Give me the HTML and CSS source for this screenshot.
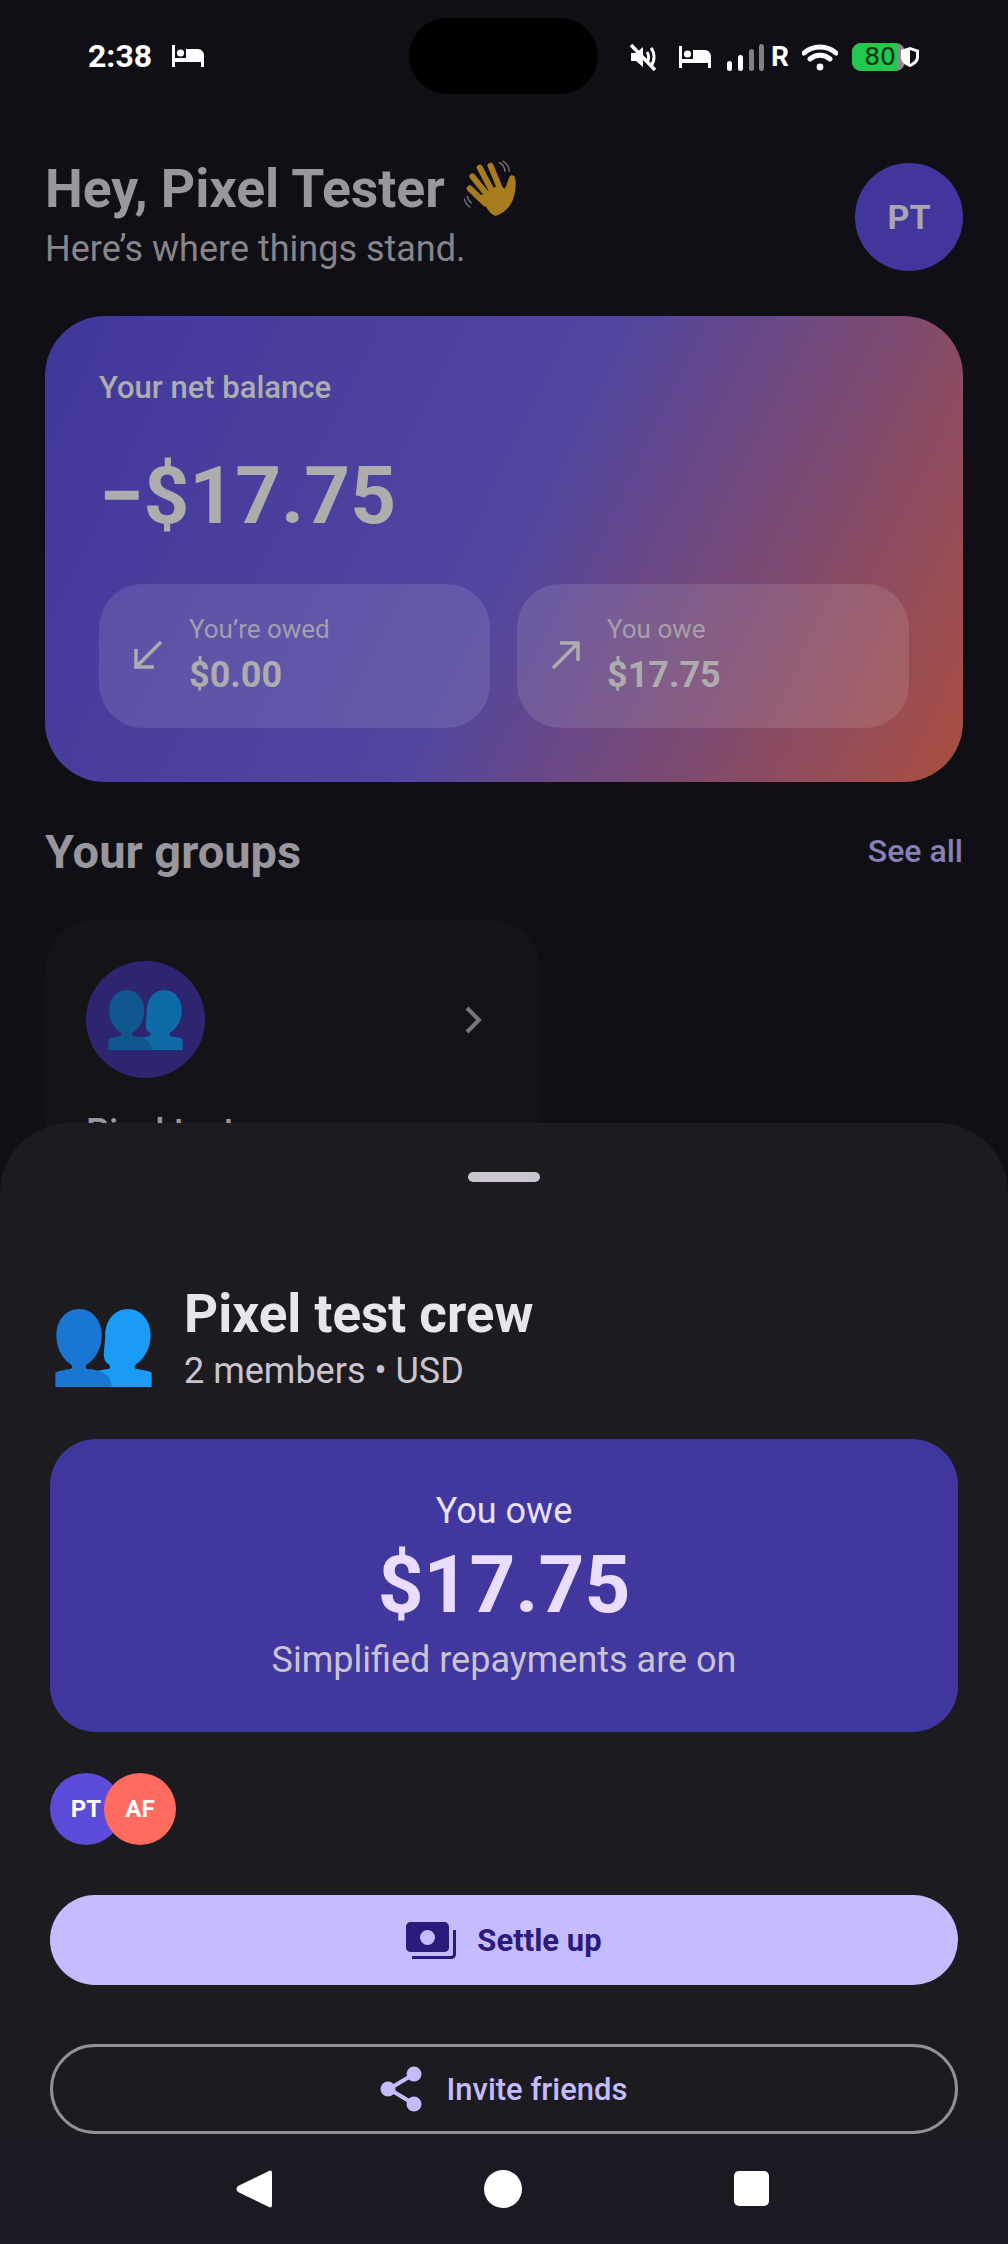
FILE: index.html
```html
<!DOCTYPE html>
<html lang="en">
<head>
  <meta charset="UTF-8">
  <meta name="viewport" content="width=device-width, initial-scale=1.0">
  <title>Pixel test crew</title>
  <link rel="stylesheet" href="styles.css">
</head>
<body>
  <svg class="defs" width="0" height="0">
    <symbol id="people" viewBox="78 90 284 230">
      <path class="front" d="M292 90c38 0 67 32 67 78 0 38-20 70-42 84-6 4-8 12 0 15 14 2 30 4 45 10v43H190v-43c14-6 30-8 44-10 8-3 6-11 0-15-22-14-9-46-9-84 0-46 29-78 67-78z"/>
      <path class="back" d="M148 90c38 0 67 32 67 78 0 38-20 70-42 84-6 4-8 12 0 15 25 2 71 8 71 53H78v-43c14-6 30-8 44-10 8-3 6-11 0-15-22-14-41-46-41-84 0-46 29-78 67-78z"/>
    </symbol>
    <symbol id="bed" viewBox="0 0 32 22">
      <path d="M0 0h3v13h11V4h12c3 0 6 3 6 6v12h-3v-5H3v5H0z"/>
      <circle cx="8.5" cy="8" r="3.6"/>
    </symbol>
  </svg>

  <div class="phone">
    <div class="status-bar">
      <div class="status-left">
        <span class="clock">2:38</span>
        <svg class="bed-icon" width="32" height="22"><use href="#bed"/></svg>
      </div>
      <div class="camera-pill"></div>
      <div class="status-right">
        <svg class="mute-icon" width="28" height="28" viewBox="0 0 28 28">
          <path d="M2 10h5l7-6v20l-7-6H2z"/>
          <path class="thin" d="M18 9c2 3 2 7 0 10M22 5c4 5 4 13 0 18"/>
          <path class="slash" d="M2 2l24 25"/>
        </svg>
        <svg class="bed-icon" width="32" height="22"><use href="#bed"/></svg>
        <svg class="signal-icon" width="38" height="27" viewBox="0 0 38 27">
          <rect x="0" y="17" width="5" height="10" rx="2.5"/>
          <rect x="11" y="11" width="5" height="16" rx="2.5"/>
          <rect class="off" x="22" y="5" width="5" height="22" rx="2.5"/>
          <rect class="off" x="32" y="0" width="5" height="27" rx="2.5"/>
        </svg>
        <span class="roaming">R</span>
        <svg class="wifi-icon" width="36" height="27" viewBox="0 0 36 27">
          <path d="M2 9c9-8 23-8 32 0M8 15c6-5 14-5 20 0"/>
          <circle cx="18" cy="23" r="3.4"/>
        </svg>
        <div class="battery"><span class="battery-level">80</span></div>
        <svg class="shield-icon" width="20" height="22" viewBox="0 0 20 22">
          <path d="M10 1l9 3v7c0 5-4 8-9 10-5-2-9-5-9-10V4z" fill="#fff"/>
          <path d="M10 4l6 2v5c0 3-3 5-6 7z" fill="#100f15"/>
        </svg>
      </div>
    </div>

    <div class="home">
      <header class="greeting">
        <div>
          <h1 class="greeting-title">Hey, Pixel Tester
            <svg class="wave" width="57" height="62" viewBox="75 55 170 185">
              <path class="wave-lines" d="M185 68c12 6 18 16 18 28M196 64c14 8 20 18 20 32M82 176c2 12 8 20 18 26M90 168c2 10 6 16 14 22"/>
              <path class="wave-fingers" d="M98 146l46 44M106 110l50 62M128 84l40 76M160 78l30 72M224 116l-18 50"/>
              <path class="wave-palm" d="M128 168l52-30 30 10 25-30c2 40-6 92-60 110-20-6-30-30-47-60z"/>
            </svg>
          </h1>
          <p class="greeting-sub">Here’s where things stand.</p>
        </div>
        <div class="avatar-me">PT</div>
      </header>

      <section class="hero">
        <div class="hero-label">Your net balance</div>
        <div class="hero-amount">−$17.75</div>
        <div class="hero-stats">
          <div class="stat">
            <svg class="arrow" width="30" height="30" viewBox="0 0 30 30"><path d="M28 2L3 27M3 9v18h18"/></svg>
            <div>
              <div class="stat-label">You’re owed</div>
              <div class="stat-value">$0.00</div>
            </div>
          </div>
          <div class="stat">
            <svg class="arrow" width="30" height="30" viewBox="0 0 30 30"><path d="M2 28L27 3M9 3h18v18"/></svg>
            <div>
              <div class="stat-label">You owe</div>
              <div class="stat-value">$17.75</div>
            </div>
          </div>
        </div>
      </section>

      <div class="section-head">
        <h2 class="section-title">Your groups</h2>
        <span class="see-all">See all</span>
      </div>

      <div class="group-card">
        <div class="group-top">
          <div class="group-circle">
            <svg class="people-dim" width="75" height="60"><use href="#people"/></svg>
          </div>
          <svg class="chevron" width="18" height="28" viewBox="0 0 18 28"><path d="M3 2l12 12L3 26"/></svg>
        </div>
        <div class="group-name">Pixel test crew</div>
      </div>
    </div>

    <!-- bottom sheet over the dimmed home screen -->
    <div class="sheet">
      <div class="sheet-body">
        <div class="handle"></div>
        <div class="sheet-head">
          <svg class="people-full" width="97" height="78"><use href="#people"/></svg>
          <div>
            <div class="sheet-title">Pixel test crew</div>
            <div class="sheet-sub">2 members • USD</div>
          </div>
        </div>

        <div class="owe-card">
          <div class="owe-label">You owe</div>
          <div class="owe-amount">$17.75</div>
          <div class="owe-note">Simplified repayments are on</div>
        </div>

        <div class="members">
          <div class="member member-pt">PT</div>
          <div class="member member-af">AF</div>
        </div>

        <button class="btn btn-settle">
          <svg width="50" height="37" viewBox="0 0 50 37">
            <path d="M5 0h33c3 0 5 2 5 5v21c0 2-2 4-5 4H5c-3 0-5-2-5-4V5c0-3 2-5 5-5zm16.500 8a7.500 7.500 0 100 15 7.500 7.500 0 000-15z" fill-rule="evenodd"/>
            <path d="M47 8h3v24c0 3-2 5-5 5H6v-3h39c1 0 2-1 2-2z"/>
          </svg>
          Settle up
        </button>
        <button class="btn btn-invite">
          <svg width="42" height="46" viewBox="0 0 42 46">
            <path class="share-line" d="M34 8L9 23l25 15"/>
            <circle cx="34" cy="8" r="7.500"/>
            <circle cx="8" cy="23" r="7.500"/>
            <circle cx="34" cy="38" r="7.500"/>
          </svg>
          Invite friends
        </button>
      </div>

      <nav class="nav-bar">
        <svg width="36" height="38" viewBox="0 0 36 38"><path d="M33 1c2-1 3 0 3 2v32c0 2-1 3-3 2L2 22c-2-2-2-4 0-6z"/></svg>
        <div class="nav-home"></div>
        <div class="nav-recent"></div>
      </nav>
    </div>
  </div>
</body>
</html>
```

FILE: styles.css
```css
* {
  margin: 0;
  padding: 0;
  box-sizing: border-box;
}

html, body {
  width: 1008px;
  height: 2244px;
  overflow: hidden;
  background-color: #100f15;
  font-family: 'Roboto', 'Liberation Sans', sans-serif;
}

.defs {
  position: absolute;
}

.phone {
  position: relative;
  width: 1008px;
  height: 2244px;
  overflow: hidden;
}

/* status bar */
.status-bar {
  position: relative;
  height: 94px;
  color: #fff;
}

.status-left {
  position: absolute;
  left: 88px;
  top: 38px;
  display: flex;
  align-items: center;
  gap: 20px;
}

.clock {
  font-size: 32px;
  font-weight: 700;
  line-height: 36px;
}

.bed-icon {
  fill: #fff;
}

.camera-pill {
  position: absolute;
  left: 409px;
  top: 18px;
  width: 189px;
  height: 76px;
  border-radius: 38px;
  background-color: #000;
}

.status-right {
  position: absolute;
  left: 629px;
  top: 43px;
  width: 292px;
  height: 28px;
  display: flex;
  align-items: center;
}

.mute-icon {
  fill: #fff;
  margin-right: 22px;
}

.mute-icon .thin,
.mute-icon .slash {
  fill: none;
  stroke: #fff;
  stroke-width: 3;
}

.mute-icon .slash {
  stroke-width: 3.5;
  stroke: #fff;
}

.signal-icon {
  fill: #fff;
  margin-left: 16px;
}

.signal-icon .off {
  fill: #808080;
}

.roaming {
  margin-left: 6px;
  font-size: 28px;
  font-weight: 700;
  line-height: 28px;
}

.wifi-icon {
  margin-left: 13px;
  fill: #fff;
}

.wifi-icon path {
  fill: none;
  stroke: #fff;
  stroke-width: 5;
  stroke-linecap: round;
}

.battery {
  margin-left: 14px;
  width: 53px;
  height: 28px;
  border-radius: 9px;
  background-color: #8a8a8a;
}

.battery-level {
  display: block;
  width: 45px;
  height: 28px;
  padding-right: 1px;
  border-radius: 9px 0 0 9px;
  background-color: #22c84e;
  color: #06320f;
  font-family: 'DejaVu Sans', sans-serif;
  font-size: 25px;
  line-height: 28px;
  text-align: right;
}

.shield-icon {
  margin-left: -5px;
}

/* home screen, dimmed by the sheet */
.home {
  padding: 0 45px;
}

.greeting {
  display: flex;
  justify-content: space-between;
  align-items: flex-start;
  padding-top: 69px;
}

.greeting-title {
  display: flex;
  align-items: center;
  gap: 17px;
  height: 66px;
  margin-top: -7px;
  color: #99969d;
  font-size: 53.5px;
  font-weight: 700;
  line-height: 66px;
}

.wave-lines {
  fill: none;
  stroke: #6f7a80;
  stroke-width: 4;
}

.wave-fingers {
  fill: none;
  stroke: #a67c1f;
  stroke-width: 18;
  stroke-linecap: round;
}

.wave-palm {
  fill: #a67c1f;
}

.greeting-sub {
  margin-top: 5px;
  color: #87848b;
  font-size: 36px;
  line-height: 44px;
}

.avatar-me {
  display: flex;
  justify-content: center;
  align-items: center;
  width: 108px;
  height: 108px;
  border-radius: 50%;
  background-color: #40369b;
  color: #a9a6b0;
  font-size: 34px;
  font-weight: 700;
}

.hero {
  height: 466px;
  margin-top: 45px;
  padding: 54px 54px 0;
  border-radius: 60px;
  background: linear-gradient(116deg, #40379b 0%, #5046a0 50%, #ab4f40 100%);
  color: #adadad;
}

.hero-label {
  font-size: 31px;
  font-weight: 500;
  line-height: 36px;
}

.hero-amount {
  margin-top: 40px;
  font-size: 80px;
  font-weight: 700;
  line-height: 100px;
}

.hero-stats {
  display: grid;
  grid-template-columns: 391px 392px;
  gap: 27px;
  margin-top: 38px;
}

.stat {
  display: flex;
  align-items: center;
  gap: 26px;
  height: 144px;
  padding: 0 0 2px 34px;
  border-radius: 44px;
  background-color: rgba(255, 255, 255, 0.11);
}

.arrow {
  fill: none;
  stroke: #adadad;
  stroke-width: 3.5;
}

.stat-label {
  font-size: 26px;
  line-height: 34px;
  opacity: 0.85;
}

.stat-value {
  margin-top: 6px;
  font-size: 36px;
  font-weight: 700;
  line-height: 46px;
}

.section-head {
  display: flex;
  justify-content: space-between;
  align-items: center;
  margin-top: 39px;
  height: 60px;
}

.section-title {
  color: #99969d;
  font-size: 47px;
  font-weight: 700;
}

.see-all {
  color: #8581b5;
  font-size: 32px;
  font-weight: 500;
}

.group-card {
  width: 495px;
  height: 300px;
  margin-top: 39px;
  padding: 41px 41px 0;
  border-radius: 50px;
  background-color: #141317;
}

.group-top {
  display: flex;
  justify-content: space-between;
  align-items: center;
  padding-right: 17px;
}

.group-circle {
  display: flex;
  justify-content: center;
  align-items: center;
  width: 119px;
  height: 117px;
  border-radius: 50%;
  background-color: #2e2570;
}

.people-dim {
  --back: #10568f;
  --front: #0f6aa8;
}

.people-full {
  --back: #1976d2;
  --front: #1a9bf5;
  margin-bottom: 5px;
}

.front {
  fill: var(--front);
}

.back {
  fill: var(--back);
}

.chevron {
  fill: none;
  stroke: #77757b;
  stroke-width: 4;
}

.group-name {
  margin-top: 33px;
  color: #99969d;
  font-size: 36px;
  font-weight: 500;
  white-space: nowrap;
}

/* bottom sheet */
.sheet {
  position: absolute;
  left: 0;
  right: 0;
  top: 1123px;
  bottom: 0;
  display: flex;
  flex-direction: column;
  border-radius: 70px 70px 0 0;
  background-color: #1c1b1f;
  overflow: hidden;
}

.sheet-body {
  flex: 1;
  padding: 0 50px;
}

.handle {
  width: 72px;
  height: 10px;
  margin: 49px auto 0;
  border-radius: 5px;
  background-color: #cac4d0;
}

.sheet-head {
  display: flex;
  align-items: flex-end;
  gap: 32px;
  margin-top: 102px;
  margin-left: 5px;
}

.sheet-title {
  color: #e8e6ea;
  font-size: 53px;
  font-weight: 700;
  line-height: 60px;
}

.sheet-sub {
  margin-top: 6px;
  color: #cac4d0;
  font-size: 36px;
  line-height: 42px;
}

.owe-card {
  display: flex;
  flex-direction: column;
  align-items: center;
  height: 293px;
  margin-top: 47px;
  padding-top: 50px;
  border-radius: 46px;
  background-color: #40379f;
}

.owe-label {
  color: #eae0ff;
  font-size: 36px;
  line-height: 44px;
}

.owe-amount {
  margin-top: 2px;
  color: #eaddff;
  font-size: 80px;
  font-weight: 700;
  line-height: 100px;
}

.owe-note {
  margin-top: 3px;
  color: #c9c3d2;
  font-size: 36px;
  line-height: 44px;
}

.members {
  display: flex;
  margin-top: 41px;
}

.member {
  display: flex;
  justify-content: center;
  align-items: center;
  width: 72px;
  height: 72px;
  border-radius: 50%;
  color: #fff;
  font-size: 24px;
  font-weight: 700;
}

.member-pt {
  background-color: #5b4dd9;
}

.member-af {
  margin-left: -18px;
  background-color: #ff6b5e;
}

.btn {
  display: flex;
  justify-content: center;
  align-items: center;
  width: 100%;
  height: 90px;
  border-radius: 45px;
  font-family: inherit;
  font-size: 31px;
  font-weight: 500;
}

.btn-settle {
  gap: 21px;
  margin-top: 50px;
  border: none;
  background-color: #c5bcff;
  color: #2b1a7c;
  fill: #2b1a7c;
  font-weight: 700;
}

.btn-invite {
  gap: 24px;
  margin-top: 59px;
  border: 3px solid #938f99;
  background: none;
  color: #c5bcff;
  fill: #c5bcff;
}

.share-line {
  fill: none;
  stroke: #c5bcff;
  stroke-width: 4;
}

.nav-bar {
  display: flex;
  justify-content: center;
  align-items: center;
  gap: 212px;
  height: 109px;
  padding: 0 3px 2px 0;
  background-color: #1a1b22;
  fill: #fff;
}

.nav-home {
  width: 38px;
  height: 38px;
  border-radius: 50%;
  background-color: #fff;
}

.nav-recent {
  width: 35px;
  height: 35px;
  border-radius: 5px;
  background-color: #fff;
}
```
